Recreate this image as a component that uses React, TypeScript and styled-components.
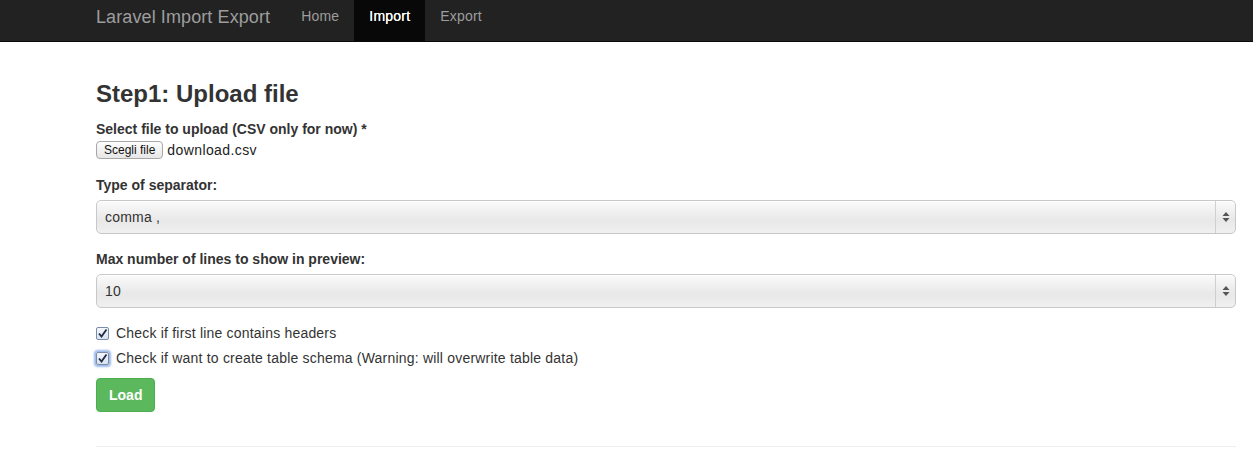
import React from 'react';
import styled, { createGlobalStyle } from 'styled-components';

const GlobalStyle = createGlobalStyle`
  html, body {
    margin: 0;
    padding: 0;
    background: #fff;
    font-family: "Liberation Sans", Arial, sans-serif;
    font-size: 14px;
    line-height: 1.428571429;
    color: #333;
  }
  * { box-sizing: border-box; }
`;

// --- Navbar ---

const Navbar = styled.nav`
  height: 42px;
  background: #222;
  border-bottom: 1px solid #080808;
`;

const NavInner = styled.div`
  display: flex;
  align-items: stretch;
  height: 41px;
  padding-left: 81px;
`;

const Brand = styled.a`
  display: block;
  padding: 5px 15px 0;
  font-size: 18px;
  letter-spacing: 0.1px;
  color: #9d9d9d;
  text-decoration: none;
  margin-right: 1px;
`;

const NavLink = styled.a<{ $active?: boolean }>`
  display: block;
  padding: 6px 15px 0;
  font-size: 14px;
  letter-spacing: 0.2px;
  text-decoration: none;
  color: ${p => (p.$active ? '#fff' : '#9d9d9d')};
  background: ${p => (p.$active ? '#080808' : 'transparent')};
  text-shadow: ${p => (p.$active ? '0 0 0.4px #fff' : 'none')};
`;

// --- Page ---

const Container = styled.main`
  width: 1140px;
  margin-left: 96px;
  padding-top: 39px;
`;

const Heading = styled.h3`
  margin: 0 0 12px;
  font-size: 24px;
  font-weight: bold;
  line-height: 1.1;
  color: #333;
`;

const FormGroup = styled.div`
  margin-bottom: 15px;
`;

const Label = styled.label`
  display: block;
  font-weight: bold;
  margin-bottom: 5px;
`;

const FileRow = styled.div`
  display: flex;
  align-items: center;
  gap: 4px;
  margin-top: -4px;
`;

const FileButton = styled.span`
  display: inline-flex;
  align-items: center;
  height: 18px;
  padding: 0 7px;
  font-size: 12px;
  color: #111;
  border: 1px solid #a7a7a7;
  border-radius: 4px;
  background: linear-gradient(#fdfdfd, #e6e6e6);
`;

const FileName = styled.span`
  font-size: 14px;
  letter-spacing: 0.4px;
  color: #222;
`;

const SelectBox = styled.div`
  display: flex;
  height: 34px;
  border: 1px solid #c8c8c8;
  border-radius: 5px;
  background: linear-gradient(#fafafa, #e8e8e8 60%, #f0f0f0);
  box-shadow: inset 0 1px 0 #fff;
`;

const SelectValue = styled.div`
  flex: 1;
  display: flex;
  align-items: center;
  padding-left: 8px;
  font-size: 14px;
  letter-spacing: 0.2px;
  color: #333;
`;

const SelectArrow = styled.div`
  width: 20px;
  border-left: 1px solid #cfcfcf;
  display: flex;
  align-items: center;
  justify-content: center;
`;

const CheckRow = styled.label`
  display: flex;
  align-items: center;
  gap: 7px;
  height: 20px;
  margin-bottom: 5px;
  letter-spacing: 0.2px;
`;

const CheckBox = styled.span<{ $focused?: boolean }>`
  width: 13px;
  height: 13px;
  border: 1px solid #7a8ca8;
  border-radius: 2px;
  background: linear-gradient(#f4f7fb, #d9e2ee);
  display: inline-flex;
  align-items: center;
  justify-content: center;
  box-shadow: ${p => (p.$focused ? '0 0 2px 2px rgba(90, 140, 220, 0.6)' : 'none')};
`;

const LoadButton = styled.button`
  margin-top: 5px;
  height: 34px;
  padding: 0 12px;
  font-family: inherit;
  font-size: 14px;
  font-weight: bold;
  color: #fff;
  background: #5cb85c;
  border: 1px solid #4cae4c;
  border-radius: 4px;
`;

const Rule = styled.hr`
  margin: 34px 0 0;
  border: 0;
  border-top: 1px solid #eee;
`;

const Arrows = () => (
  <svg width="8" height="12" viewBox="0 0 8 12">
    <path d="M4 1 L7.5 5 L0.5 5 Z" fill="#555" />
    <path d="M4 11 L7.5 7 L0.5 7 Z" fill="#555" />
  </svg>
);

const Tick = () => (
  <svg width="11" height="11" viewBox="0 0 11 11">
    <path d="M2 5.5 L4.5 8.5 L9.5 1.5" fill="none" stroke="#1d2a44" strokeWidth="1.8" />
  </svg>
);

const App: React.FC = () => (
  <>
    <GlobalStyle />
    <Navbar>
      <NavInner>
        <Brand href="#">Laravel Import Export</Brand>
        <NavLink href="#">Home</NavLink>
        <NavLink href="#" $active>Import</NavLink>
        <NavLink href="#">Export</NavLink>
      </NavInner>
    </Navbar>

    <Container>
      <Heading>Step1: Upload file</Heading>

      <FormGroup>
        <Label>Select file to upload (CSV only for now) *</Label>
        <FileRow>
          <FileButton>Scegli file</FileButton>
          <FileName>download.csv</FileName>
        </FileRow>
      </FormGroup>

      <FormGroup>
        <Label>Type of separator:</Label>
        <SelectBox>
          <SelectValue>comma ,</SelectValue>
          <SelectArrow><Arrows /></SelectArrow>
        </SelectBox>
      </FormGroup>

      <FormGroup>
        <Label>Max number of lines to show in preview:</Label>
        <SelectBox>
          <SelectValue>10</SelectValue>
          <SelectArrow><Arrows /></SelectArrow>
        </SelectBox>
      </FormGroup>

      <CheckRow>
        <CheckBox><Tick /></CheckBox>
        Check if first line contains headers
      </CheckRow>
      <CheckRow>
        <CheckBox $focused><Tick /></CheckBox>
        Check if want to create table schema (Warning: will overwrite table data)
      </CheckRow>

      <LoadButton>Load</LoadButton>
      <Rule />
    </Container>
  </>
);

export default App;
